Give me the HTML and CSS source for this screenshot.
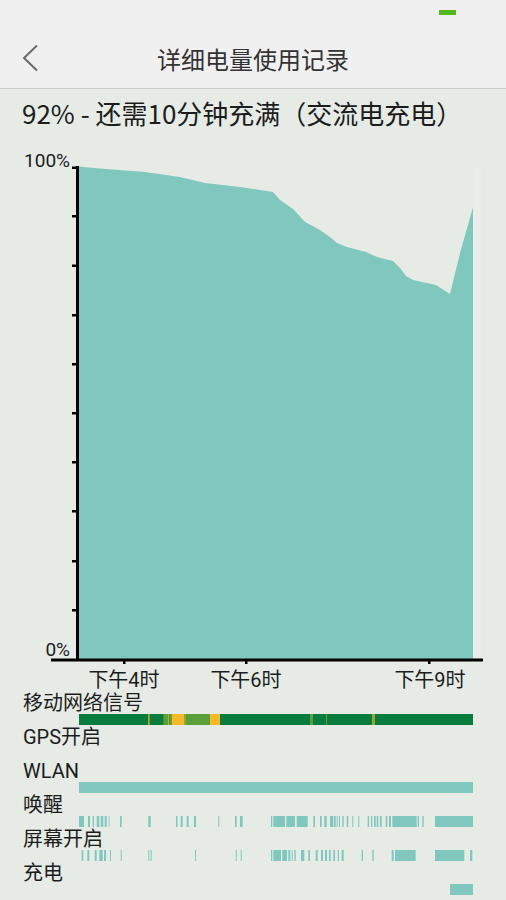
FILE: index.html
```html
<!DOCTYPE html>
<html lang="zh-CN">
	<head>
		<meta charset="utf-8">
		<meta name="viewport" content="width=device-width,initial-scale=1">
		<title>详细电量使用记录</title>
		<link rel="stylesheet" href="styles.css">
	</head>
	<body>
		<div class="status"><span class="battery"></span></div>
		<header class="appbar">
			<svg class="back" width="18" height="28" viewBox="0 0 18 28"><path d="M15 1.5 2 14l13 12.5"/></svg>
			<h1>详细电量使用记录</h1>
		</header>
		<p class="summary">92% - 还需10分钟充满（交流电充电）</p>
		<svg class="chart" width="506" height="551" viewBox="0 140 506 551">
			<rect class="fade" x="473" y="167" width="8" height="491"/>
			<path class="area" d="M78 166.5 100 168.5 145 172 180 177 205 183 240 187 273 192 280 200 293 209 305 222 320 230 330 237 337 243 347 247 366 252 377 257 393 261 400 268 406 276 413 280 436 285 450 294 460 253 473 207 473 659 78 659Z"/>
			<g class="axis">
				<rect x="76" y="166" width="3" height="495"/>
				<rect x="51" y="658.5" width="432" height="3"/>
				<rect x="72" y="166.5" width="5" height="2.5"/>
				<rect x="72" y="215" width="5" height="2.5"/>
				<rect x="72" y="264.5" width="5" height="2.5"/>
				<rect x="72" y="314" width="5" height="2.5"/>
				<rect x="72" y="363" width="5" height="2.5"/>
				<rect x="72" y="412" width="5" height="2.5"/>
				<rect x="72" y="461" width="5" height="2.5"/>
				<rect x="72" y="510" width="5" height="2.5"/>
				<rect x="72" y="560" width="5" height="2.5"/>
				<rect x="72" y="609" width="5" height="2.5"/>
				<rect x="123" y="661" width="2.5" height="3"/>
				<rect x="245" y="661" width="2.5" height="3"/>
				<rect x="428" y="661" width="2.5" height="3"/>
			</g>
			<text class="ylabel" x="70" y="167">100%</text>
			<text class="ylabel" x="70" y="656">0%</text>
			<text class="xlabel" x="124" y="687">下午4时</text>
			<text class="xlabel" x="246" y="687">下午6时</text>
			<text class="xlabel" x="430" y="687">下午9时</text>
		</svg>
		<ul class="tracks">
			<li>
				<span class="track-label">移动网络信号</span>
				<svg class="track-bar" viewBox="0 0 394 11">
					<rect class="sig-good" width="394" height="11"/>
					<rect class="sig-poor" x="69.3" width="1.2" height="11"/>
					<rect class="sig-mid" x="84.3" width="5" height="11"/>
					<rect class="sig-poor" x="89.3" width="1" height="11"/>
					<rect class="sig-mid" x="90.3" width="2.4" height="11"/>
					<rect class="sig-poor" x="92.7" width="12.3" height="11"/>
					<rect class="sig-olive" x="105" width="2" height="11"/>
					<rect class="sig-mid" x="107" width="24" height="11"/>
					<rect class="sig-poor" x="131" width="10" height="11"/>
					<rect class="sig-mid" x="231" width="3" height="11"/>
					<rect class="sig-mid" x="247" width="1" height="11"/>
					<rect class="sig-olive" x="293" width="3" height="11"/>
				</svg>
			</li>
			<li>
				<span class="track-label">GPS开启</span>
				<svg class="track-bar" viewBox="0 0 394 11"></svg>
			</li>
			<li>
				<span class="track-label">WLAN</span>
				<svg class="track-bar" viewBox="0 0 394 11">
					<rect class="on" width="394" height="11"/>
				</svg>
			</li>
			<li>
				<span class="track-label">唤醒</span>
				<svg class="track-bar" viewBox="0 0 394 11">
					<g class="on">
						<rect x="0" width="5" height="11"/>
						<rect x="9" width="2" height="11"/>
						<rect x="13.7" width="1.3" height="11"/>
						<rect x="17.7" width="2.6" height="11"/>
						<rect x="21.7" width="2.6" height="11"/>
						<rect x="25.7" width="2" height="11"/>
						<rect x="29.7" width="0.8" height="11"/>
						<rect x="41" width="1.7" height="11"/>
						<rect x="69.3" width="2.4" height="11"/>
						<rect x="97" width="1.5" height="11"/>
						<rect x="101.7" width="2" height="11"/>
						<rect x="107.7" width="2" height="11"/>
						<rect x="115" width="2" height="11"/>
						<rect x="139.3" width="1" height="11"/>
						<rect x="156" width="1.7" height="11"/>
						<rect x="161" width="2.7" height="11"/>
						<rect x="192" width="1.3" height="11"/>
						<rect x="194.3" width="11.7" height="11"/>
						<rect x="207.3" width="8.7" height="11"/>
						<rect x="217.7" width="11" height="11"/>
						<rect x="234.3" width="1.7" height="11"/>
						<rect x="241" width="1.7" height="11"/>
						<rect x="245.3" width="2.4" height="11"/>
						<rect x="251" width="3.3" height="11"/>
						<rect x="255" width="1.7" height="11"/>
						<rect x="257.7" width="1" height="11"/>
						<rect x="260" width="1" height="11"/>
						<rect x="263.3" width="1.4" height="11"/>
						<rect x="267.7" width="1.6" height="11"/>
						<rect x="273.3" width="1" height="11"/>
						<rect x="279.3" width="1" height="11"/>
						<rect x="288.7" width="1.3" height="11"/>
						<rect x="292" width="1.3" height="11"/>
						<rect x="295" width="1.7" height="11"/>
						<rect x="297.7" width="1.6" height="11"/>
						<rect x="301" width="1.7" height="11"/>
						<rect x="306.7" width="1.6" height="11"/>
						<rect x="310" width="2" height="11"/>
						<rect x="313.3" width="24.4" height="11"/>
						<rect x="338.7" width="1.3" height="11"/>
						<rect x="343.3" width="1.4" height="11"/>
						<rect x="356" width="38" height="11"/>
					</g>
				</svg>
			</li>
			<li>
				<span class="track-label">屏幕开启</span>
				<svg class="track-bar" viewBox="0 0 394 11">
					<g class="on">
						<rect x="2.7" width="1.6" height="11"/>
						<rect x="8.3" width="2" height="11"/>
						<rect x="15.7" width="2" height="11"/>
						<rect x="20.3" width="3.4" height="11"/>
						<rect x="25" width="2" height="11"/>
						<rect x="31" width="1" height="11"/>
						<rect x="41.7" width="1" height="11"/>
						<rect x="69.3" width="1" height="11"/>
						<rect x="71.7" width="1" height="11"/>
						<rect x="116" width="1" height="11"/>
						<rect x="156.7" width="1" height="11"/>
						<rect x="161.7" width="1" height="11"/>
						<rect x="192" width="1.3" height="11"/>
						<rect x="194.3" width="7.7" height="11"/>
						<rect x="203.3" width="4.7" height="11"/>
						<rect x="209.3" width="2" height="11"/>
						<rect x="212.7" width="1" height="11"/>
						<rect x="215.3" width="1.4" height="11"/>
						<rect x="222" width="3.3" height="11"/>
						<rect x="229.3" width="1.7" height="11"/>
						<rect x="236.7" width="2" height="11"/>
						<rect x="242" width="2" height="11"/>
						<rect x="246" width="2" height="11"/>
						<rect x="250" width="1.7" height="11"/>
						<rect x="254.3" width="1.7" height="11"/>
						<rect x="258.7" width="1.3" height="11"/>
						<rect x="262.7" width="2" height="11"/>
						<rect x="282.7" width="1.3" height="11"/>
						<rect x="293.3" width="1.4" height="11"/>
						<rect x="312.7" width="2" height="11"/>
						<rect x="316" width="20.7" height="11"/>
						<rect x="356" width="29.3" height="11"/>
						<rect x="391" width="2.3" height="11"/>
					</g>
				</svg>
			</li>
			<li>
				<span class="track-label">充电</span>
				<svg class="track-bar" viewBox="0 0 394 11">
					<rect class="on" x="371" width="23" height="11"/>
				</svg>
			</li>
		</ul>
	</body>
</html>
```
FILE: styles.css
```css
:root{
	--bg:#e6ebe6;
	--bar:#f0f0f0;
	--teal:#80c8be;
	--ink:#1c1c1c;
}
body{
	background-color:var(--bg);
	color:var(--ink);
	font-family:Roboto,'Noto Sans CJK SC',sans-serif;
	margin:0;
	width:506px;
}
.status{
	background-color:var(--bar);
	height:28px;
	position:relative;
}
.battery{
	background-color:#52b81c;
	height:5px;
	left:439px;
	position:absolute;
	top:10px;
	width:17px;
}
.appbar{
	align-items:center;
	background-color:var(--bar);
	border-bottom:1px solid #c9cbc9;
	display:flex;
	height:60px;
	justify-content:center;
	position:relative;
}
.appbar h1{
	color:#333;
	font-size:24px;
	font-weight:normal;
	margin:0;
}
.back{
	fill:none;
	left:22px;
	position:absolute;
	stroke:#6a6a6a;
	stroke-width:2;
	top:16px;
}
.summary{
	font-family:'Noto Sans CJK SC',sans-serif;
	font-size:26px;
	height:51px;
	line-height:48px;
	margin:0;
	padding-left:22px;
	text-spacing-trim:space-all;
}
.chart{
	display:block;
}
.area{
	fill:var(--teal);
}
.fade{
	fill:#e9edea;
}
.axis{
	fill:#000;
}
.chart text{
	fill:var(--ink);
	font-family:Roboto,'Noto Sans CJK SC',sans-serif;
}
.ylabel{
	font-size:19px;
	text-anchor:end;
}
.xlabel{
	font-size:20px;
	text-anchor:middle;
}
.tracks{
	list-style:none;
	margin:0;
	padding:0;
}
.tracks li{
	display:flex;
	flex-direction:column;
}
.track-label{
	font-size:20px;
	height:23px;
	line-height:25px;
	padding-left:23px;
}
.track-bar{
	display:block;
	height:11px;
	margin-left:79px;
	width:394px;
}
.on{
	fill:var(--teal);
}
.sig-good{
	fill:#0a7c3d;
}
.sig-mid{
	fill:#5c9e38;
}
.sig-olive{
	fill:#93a834;
}
.sig-poor{
	fill:#f6b927;
}
```
